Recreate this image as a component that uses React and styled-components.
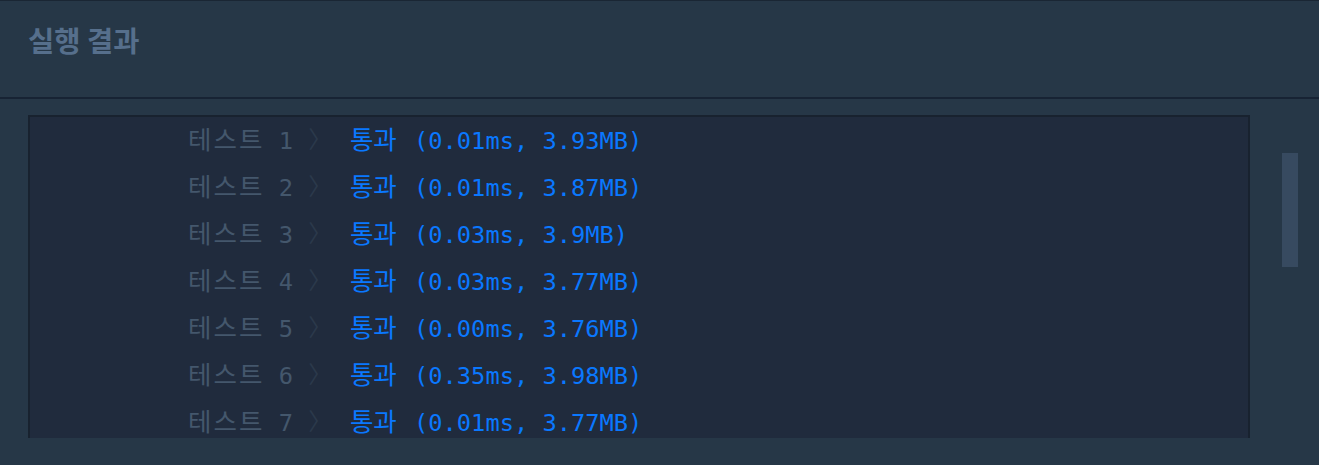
import React from 'react';
import styled, { createGlobalStyle } from 'styled-components';

const GlobalStyle = createGlobalStyle`
  html, body {
    margin: 0;
    padding: 0;
    background: #263747;
  }
  body {
    font-family: "Noto Sans", "Noto Sans CJK KR", sans-serif;
    overflow: hidden;
  }
`;

const Page = styled.div`
  width: 1319px;
  height: 465px;
  background: #263747;
  border-top: 1px solid #1a2634;
  box-sizing: border-box;
  overflow: hidden;
`;

const Header = styled.div`
  height: 98px;
  padding: 0 28px;
  display: flex;
  align-items: center;
  border-bottom: 2px solid #172334;
  box-sizing: border-box;
`;

const Title = styled.h2`
  margin: 0 0 19px;
  font-family: "Noto Sans CJK KR", sans-serif;
  font-size: 28.5px;
  font-weight: 700;
  color: #566f8c;
`;

const Body = styled.div`
  display: flex;
  padding: 16px 0 0 28px;
`;

const Console = styled.div`
  width: 1222px;
  height: 323px;
  background: #202b3d;
  border: 2px solid #18222f;
  border-bottom: none;
  box-sizing: border-box;
  overflow: hidden;
`;

const Row = styled.div`
  display: flex;
  align-items: center;
  height: 47px;
  padding-left: 158px;
  margin-top: -3px;
  margin-bottom: 3px;
  font-family: "DejaVu Sans Mono", "Noto Sans CJK KR", monospace;
  font-size: 23.7px;
  white-space: pre;
`;

const Ko = styled.span`
  font-family: "Noto Sans CJK KR", sans-serif;
  font-size: 25.5px;
  font-weight: 400;
  letter-spacing: ${p => (p.$wide ? '2px' : '0')};
  margin-right: ${p => (p.$wide ? '0' : '3px')};
`;

const Label = styled.span`
  color: #44576c;
`;

const Chevron = styled.span`
  color: #2b394b;
  margin: 0 18px 0 1px;
`;

const Result = styled.span`
  color: ${p => (p.$pass ? '#0a78ff' : '#e04a4a')};
`;

const Track = styled.div`
  margin-left: 32px;
  padding-top: 38px;
`;

const Thumb = styled.div`
  width: 16px;
  height: 114px;
  background: #374a60;
`;

const results = [
  ['0.01ms', '3.93MB'],
  ['0.01ms', '3.87MB'],
  ['0.03ms', '3.9MB'],
  ['0.03ms', '3.77MB'],
  ['0.00ms', '3.76MB'],
  ['0.35ms', '3.98MB'],
  ['0.01ms', '3.77MB']
];

const App = () => (
  <>
    <GlobalStyle />
    <Page>
      <Header>
        <Title>실행 결과</Title>
      </Header>
      <Body>
        <Console>
          {results.map(([time, mem], i) => (
            <Row key={i}>
              <Label>
                <Ko $wide>테스트</Ko>
                {` ${i + 1} `}
              </Label>
              <Chevron>〉</Chevron>
              <Result $pass>
                <Ko>통과</Ko>
                {` (${time}, ${mem})`}
              </Result>
            </Row>
          ))}
        </Console>
        <Track>
          <Thumb />
        </Track>
      </Body>
    </Page>
  </>
);

export default App;
